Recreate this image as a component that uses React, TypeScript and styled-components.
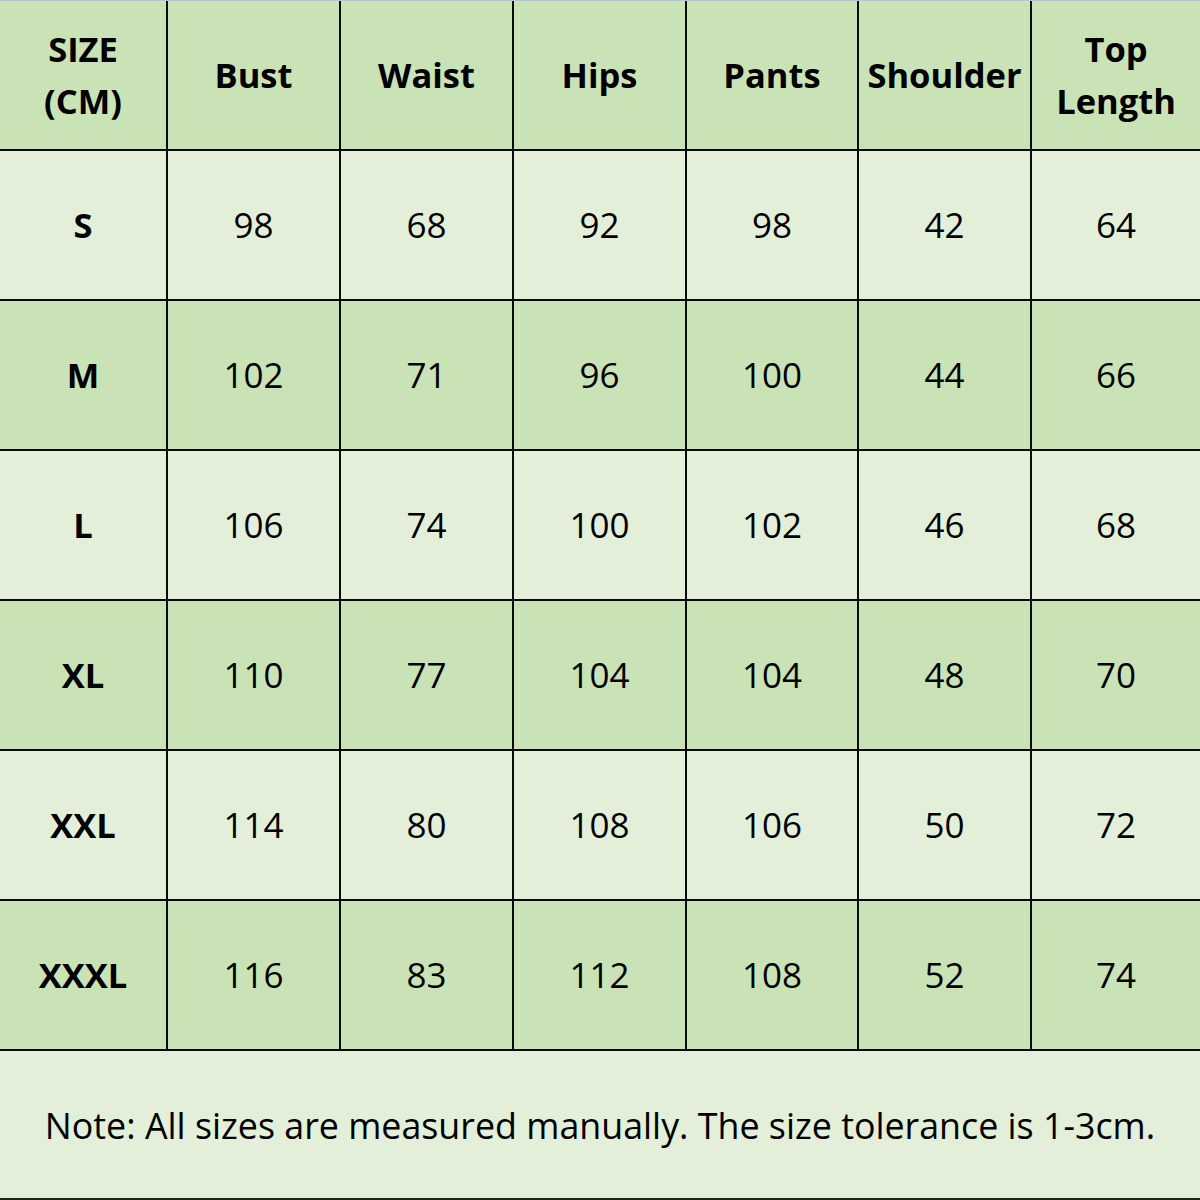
import styled, { createGlobalStyle } from 'styled-components';

const columns = ['Bust', 'Waist', 'Hips', 'Pants', 'Shoulder', 'Top Length'];

const sizes = [
  { size: 'S', values: [98, 68, 92, 98, 42, 64] },
  { size: 'M', values: [102, 71, 96, 100, 44, 66] },
  { size: 'L', values: [106, 74, 100, 102, 46, 68] },
  { size: 'XL', values: [110, 77, 104, 104, 48, 70] },
  { size: 'XXL', values: [114, 80, 108, 106, 50, 72] },
  { size: 'XXXL', values: [116, 83, 112, 108, 52, 74] },
];

const GlobalStyle = createGlobalStyle`
  body {
    margin: 0;
    background: #e3efd9;
    font-family: 'Open Sans', 'Noto Sans', sans-serif;
    color: #000;
  }
`;

function App() {
  return (
    <Page>
      <GlobalStyle />
      <Table>
        <Cell $head $dark>
          SIZE
          <br />
          (CM)
        </Cell>
        {columns.map((col) => (
          <Cell key={col} $head $dark>
            {col === 'Top Length' ? (
              <>
                Top
                <br />
                Length
              </>
            ) : (
              col
            )}
          </Cell>
        ))}

        {sizes.map((row, ind) => {
          const dark = ind % 2 === 1;
          return [
            <Cell key={row.size} $head $dark={dark}>
              {row.size}
            </Cell>,
            ...row.values.map((v, i) => (
              <Cell key={row.size + i} $dark={dark}>
                {v}
              </Cell>
            )),
          ];
        })}
      </Table>
      <Note>Note: All sizes are measured manually. The size tolerance is 1-3cm.</Note>
    </Page>
  );
}

const Page = styled.div`
  width: 1200px;
  height: 1200px;
  display: flex;
  flex-direction: column;
  border-top: 1px solid #b3c6d2;
  box-sizing: border-box;
  border-bottom: 2px solid #1c2418;
  background: #e3efd9;
`;

const Table = styled.div`
  display: grid;
  grid-template-columns: 166px 171px 171px 171px 170px 171px 168px;
  grid-auto-rows: 148px;
  gap: 2px;
  background: #0a0a0a;
  border-bottom: 2px solid #0a0a0a;
`;

const Cell = styled.div<{ $head?: boolean; $dark?: boolean }>`
  display: flex;
  align-items: center;
  justify-content: center;
  text-align: center;
  background: ${(p) => (p.$dark ? '#c9e2b6' : '#e3efd9')};
  font-size: ${(p) => (p.$head ? '34.5px' : '35px')};
  font-weight: ${(p) => (p.$head ? 700 : 400)};
  line-height: 52px;
`;

const Note = styled.div`
  flex: 1;
  display: flex;
  align-items: center;
  justify-content: center;
  font-size: 35.8px;
`;

export default App;
